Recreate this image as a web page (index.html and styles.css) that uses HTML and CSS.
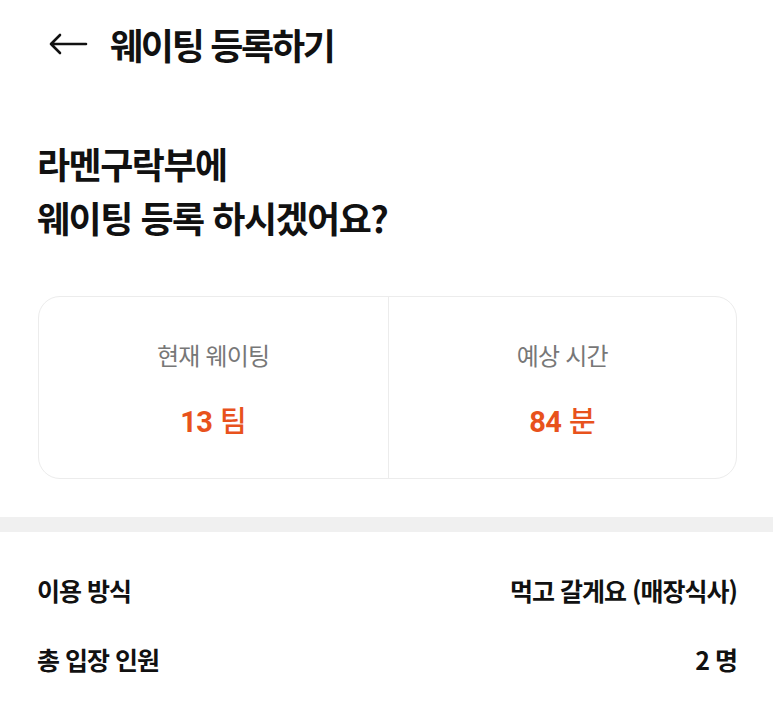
FILE: index.html
```html
<!DOCTYPE html>
<html lang="ko">
<head>
<meta charset="utf-8">
<link rel="stylesheet" href="styles.css">
</head>
<body>
<header class="topbar">
  <svg class="back" width="40" height="24" viewBox="0 0 40 24" fill="none" stroke="#111" stroke-width="2.6" stroke-linecap="round" stroke-linejoin="round">
    <path d="M38 12 H3 M12 3 L3 12 L12 21"/>
  </svg>
  <h1 class="title">웨이팅 등록하기</h1>
</header>
<section class="intro">
  <p>라멘구락부에</p>
  <p>웨이팅 등록 하시겠어요?</p>
</section>
<section class="stats">
  <div class="stat">
    <div class="stat-label">현재 웨이팅</div>
    <div class="stat-value"><b>13</b> 팀</div>
  </div>
  <div class="stat">
    <div class="stat-label">예상 시간</div>
    <div class="stat-value"><b>84</b> 분</div>
  </div>
</section>
<div class="band"></div>
<section class="info">
  <div class="row"><span>이용 방식</span><span>먹고 갈게요 (매장식사)</span></div>
  <div class="row"><span>총 입장 인원</span><span>2 명</span></div>
</section>
</body>
</html>
```
FILE: styles.css
```css
* { box-sizing: border-box; margin: 0; padding: 0; }
body {
  margin: 0;
  background: #fff;
  font-family: "Noto Sans CJK KR", "Noto Sans", sans-serif;
  color: #111;
}
.topbar {
  height: 88px;
  display: flex;
  align-items: center;
  padding-left: 48px;
  gap: 22px;
}
.back { display: block; }
.title {
  font-size: 36px;
  font-weight: 700;
  letter-spacing: -2.3px;
}
.intro {
  padding: 48px 37px 0;
  font-size: 36px;
  font-weight: 700;
  line-height: 54px;
  letter-spacing: -1.5px;
}
.stats {
  margin: 52px 36px 0 38px;
  height: 183px;
  border: 1.5px solid #ececec;
  border-radius: 22px;
  display: grid;
  grid-template-columns: 1fr 1fr;
}
.stat {
  display: flex;
  flex-direction: column;
  align-items: center;
  padding-top: 40px;
}
.stat + .stat { border-left: 1.5px solid #ececec; }
.stat-label {
  font-size: 24px;
  color: #777;
  letter-spacing: -0.8px;
}
.stat-value {
  margin-top: 26px;
  font-size: 29px;
  color: #e8521c;
  font-weight: 500;
  letter-spacing: -0.5px;
}
.stat-value b { font-weight: 700; font-family: "Roboto", "Noto Sans CJK KR", sans-serif; }
.band {
  margin-top: 38px;
  height: 15px;
  background: #f0f0f0;
}
.info {
  padding: 40px 36px 0 37px;
}
.row {
  display: flex;
  justify-content: space-between;
  align-items: center;
  height: 36px;
  font-size: 25px;
  font-weight: 700;
  letter-spacing: -1px;
}
.row + .row { margin-top: 33px; }
```
